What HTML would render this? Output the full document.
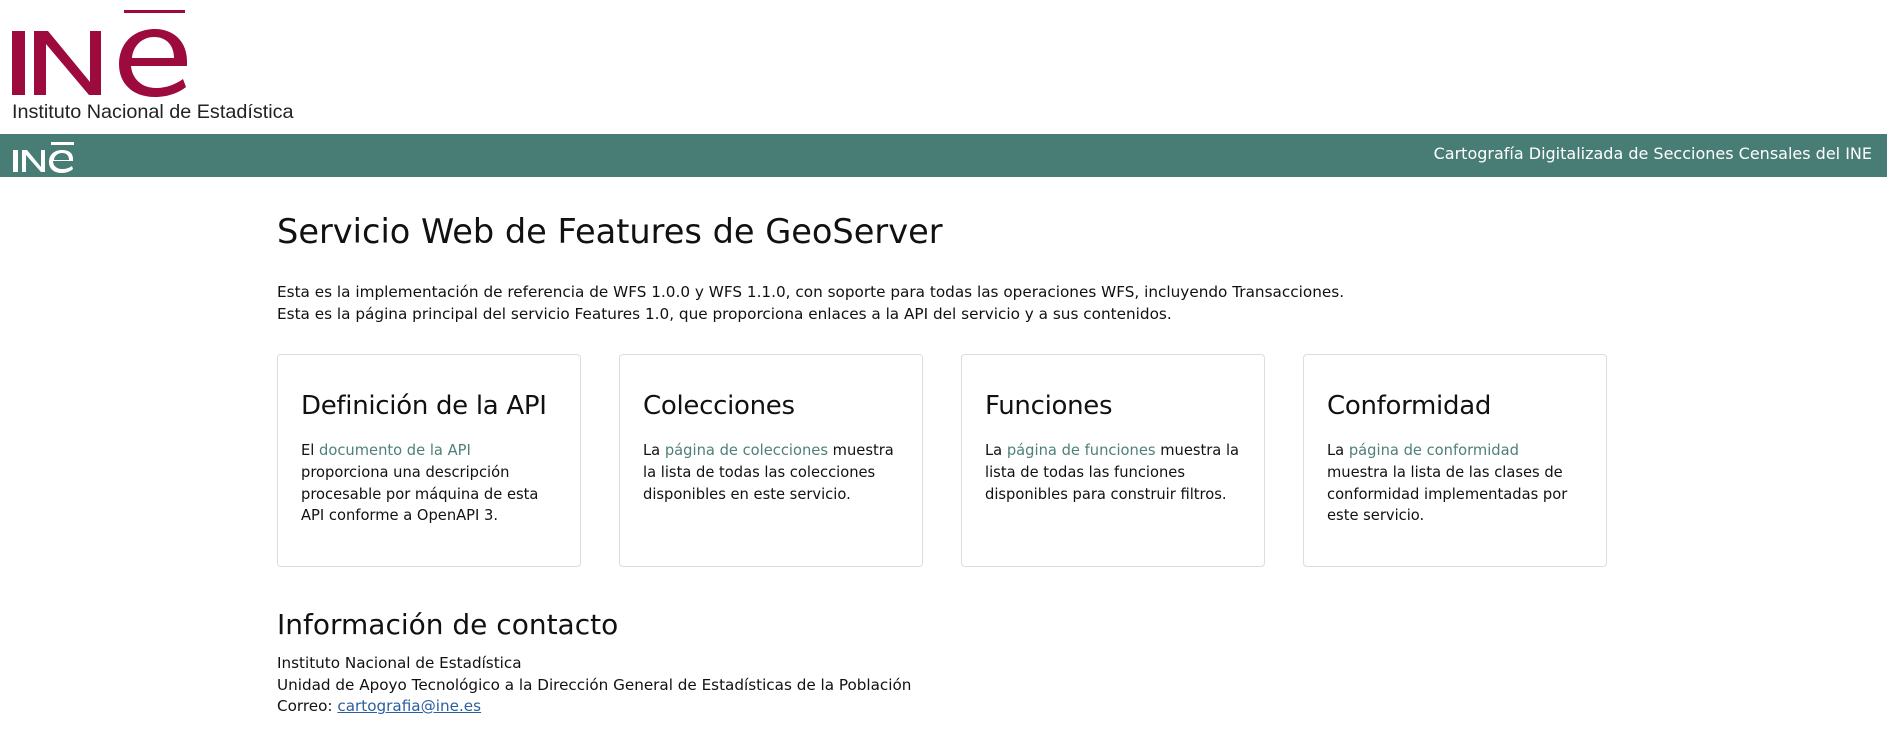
<!DOCTYPE html>
<html><head><meta charset="utf-8"><style>
html,body{margin:0;padding:0;background:#fff;width:1897px;height:753px;overflow:hidden}
body{font-family:"DejaVu Sans","Liberation Sans",sans-serif;color:#111}
.logo{position:absolute;left:12px;top:10px}
.bar{position:absolute;left:0;top:134px;width:1887px;height:43px;background:#487d76}
.bar .t{position:absolute;right:15px;top:10px;color:#fff;font-size:16px}
.main{position:absolute;left:277px;top:0}
h1{position:absolute;top:212px;left:0;margin:0;font-weight:normal;font-size:33.6px;white-space:nowrap}
.p{position:absolute;top:282px;left:0;font-size:15.25px;line-height:21.5px;white-space:nowrap}
.card{position:absolute;top:354px;width:304px;height:213px;border:1px solid #ddd;border-radius:4px;box-sizing:border-box;padding:0 20px 0 23px}
.card h3{margin:36px 0 0;font-weight:normal;font-size:26px;white-space:nowrap;letter-spacing:-0.3px}
.card div{margin-top:19px;font-size:14.7px;line-height:21.8px}
a{color:#4e8078;text-decoration:none}
h2{position:absolute;top:608px;left:0;margin:0;font-weight:normal;font-size:28px;white-space:nowrap}
.c{position:absolute;top:653px;left:0;font-size:15.2px;line-height:21.6px;white-space:nowrap}
.c a{color:#2a5f9e;text-decoration:underline}
</style></head><body>
<svg class="logo" width="300" height="112" viewBox="0 0 300 112">
<g fill="#9c0a3e" transform="translate(0,-6)">
<rect x="0" y="27" width="13" height="64"/>
<polygon points="22,27 36,27 78,78 78,27 89,27 89,91 77,91 34,40 34,91 22,91"/>
<rect x="112" y="1" width="61" height="8"/>
<path d="M143 25c-22 0-36 15-36 35s14 33 36 33c14 0 25-5 31-10l-3-8c-7 5-16 9-27 9-15 0-24-10-25-22h56v-5c0-19-13-32-32-32zm-23 29c1-12 10-21 22-21 13 0 20 9 20 21z"/>
</g>
<text x="0" y="108" font-family="Liberation Sans, sans-serif" font-size="19.8" fill="#222">Instituto Nacional de Estadística</text>
</svg>
<div class="bar">
<svg style="position:absolute;left:13px;top:7px" width="64" height="32" viewBox="0 0 64 32"><g fill="#fff">
<rect x="0" y="9" width="5" height="22"/><polygon points="9,9 14,9 28,26 28,9 32,9 32,31 28,31 13,14 13,31 9,31"/>
<rect x="38" y="1" width="23" height="3"/>
<path d="M49 9c-8 0-13 5-13 12s5 11 13 11c5 0 9-2 11-4l-1-3c-3 2-6 3-10 3-5 0-9-3-9-8h20v-2c0-6-4-9-11-9zm-8 10c0-4 4-7 8-7 5 0 7 3 7 7z"/></g></svg>
<div class="t">Cartografía Digitalizada de Secciones Censales del INE</div></div>
<div class="main">
<h1>Servicio Web de Features de GeoServer</h1>
<div class="p">Esta es la implementación de referencia de WFS 1.0.0 y WFS 1.1.0, con soporte para todas las operaciones WFS, incluyendo Transacciones.<br>Esta es la página principal del servicio Features 1.0, que proporciona enlaces a la API del servicio y a sus contenidos.</div>
<div class="card" style="left:0"><h3>Definición de la API</h3><div>El <a>documento de la API</a><br>proporciona una descripción procesable por máquina de esta API conforme a OpenAPI 3.</div></div>
<div class="card" style="left:342px"><h3>Colecciones</h3><div>La <a>página de colecciones</a> muestra la lista de todas las colecciones disponibles en este servicio.</div></div>
<div class="card" style="left:684px"><h3>Funciones</h3><div>La <a>página de funciones</a> muestra la lista de todas las funciones disponibles para construir filtros.</div></div>
<div class="card" style="left:1026px"><h3>Conformidad</h3><div>La <a>página de conformidad</a><br>muestra la lista de las clases de conformidad implementadas por este servicio.</div></div>
<h2>Información de contacto</h2>
<div class="c">Instituto Nacional de Estadística<br>Unidad de Apoyo Tecnológico a la Dirección General de Estadísticas de la Población<br>Correo: <a>cartografia@ine.es</a></div>
</div>
</body></html>
